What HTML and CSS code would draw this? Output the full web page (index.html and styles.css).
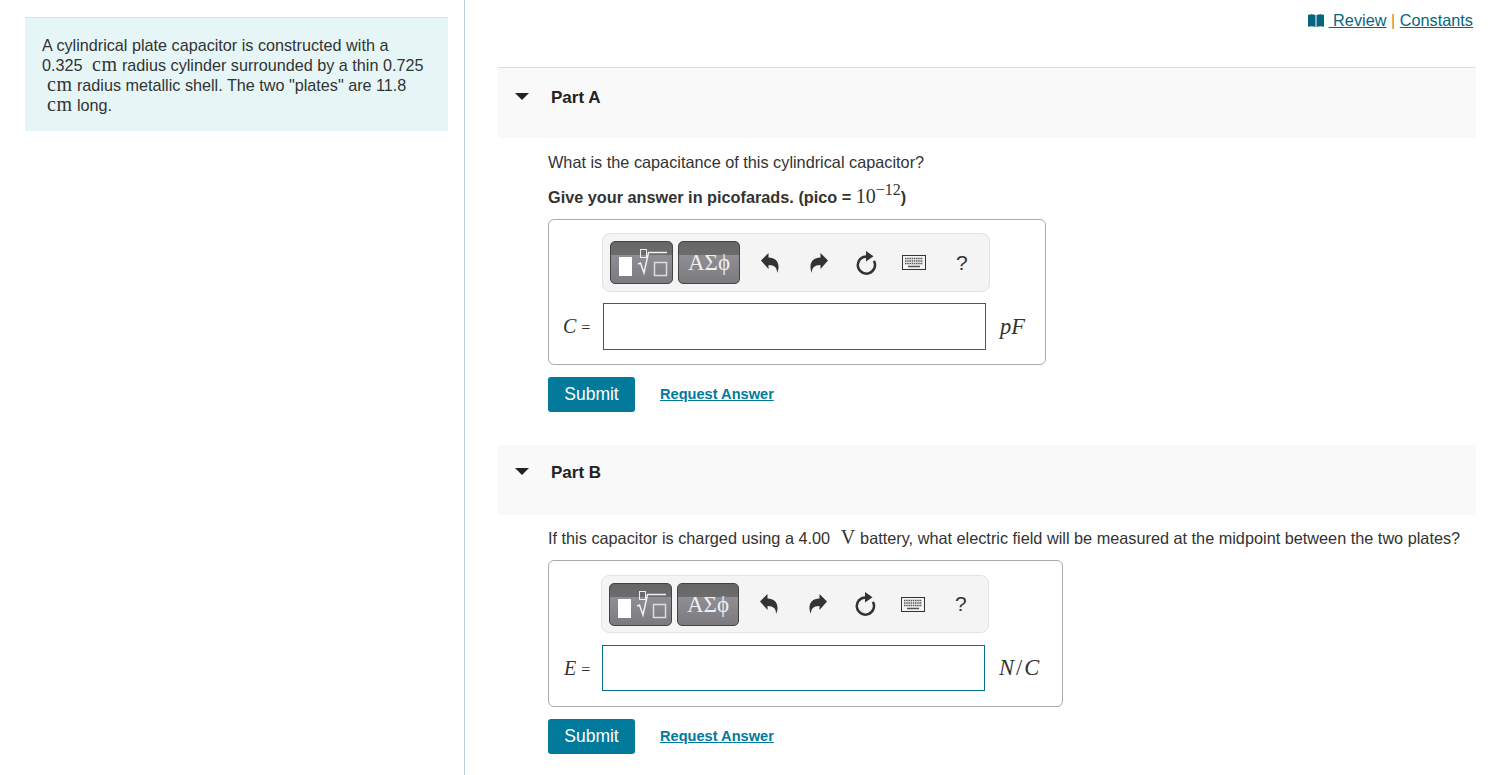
FILE: index.html
```html
<!DOCTYPE html>
<html lang="en">
<head>
    <meta charset="UTF-8">
    <title>Cylindrical Capacitor</title>
    <link rel="stylesheet" href="styles.css">
</head>
<body>
    <div class="layout">
        <div class="intro-col">
            <div class="intro">
                A cylindrical plate capacitor is constructed with a<br>
                0.325 <span class="unit first">cm</span> radius cylinder surrounded by a thin 0.725<br>
                <span class="unit">cm</span> radius metallic shell. The two "plates" are 11.8<br>
                <span class="unit">cm</span> long.
            </div>
        </div>

        <div class="main-col">
            <div class="top-links">
                <svg class="book" width="16" height="13" viewBox="0 0 16 13"><path d="M0 .8C2.500 0 5 0 7.500 1V13C5 12 2.500 12 0 12.800zM8.500 1C11 0 13.500 0 16 .8V12.800C13.500 12 11 12 8.500 13z" fill="#05667d"/></svg>
                <a href="#">&nbsp;Review</a> <span class="sep">|</span> <a href="#">Constants</a>
            </div>

            <div class="part-head part-a">
                <span class="caret"></span>
                <span class="part-title">Part A</span>
            </div>
            <div class="part-body first-part">
                <p class="question">What is the capacitance of this cylindrical capacitor?</p>
                <p class="hint">Give your answer in picofarads. (pico = <span class="math-num">10<sup>&minus;12</sup></span>)</p>

                <div class="answer-box box-a">
                    <div class="toolbar">
                        <div class="tool-btn btn-tmpl">
                            <svg width="61" height="41" viewBox="0 0 61 41">
                                <rect x="8" y="15" width="13" height="19" fill="#fff"/>
                                <rect x="29.500" y="7.500" width="6" height="8" fill="none" stroke="#eee"/>
                                <path d="M27 22l2.500-1 3.500 10 4.500-20.500H56" fill="none" stroke="#f0f0f0" stroke-width="1.500"/>
                                <rect x="43.500" y="20.500" width="12" height="13" fill="none" stroke="#ddd" stroke-width="1.500"/>
                            </svg>
                        </div>
                        <div class="tool-btn btn-greek">&Alpha;&Sigma;&#981;</div>
                        <svg class="tool-icon undo" width="18" height="20" viewBox="0 0 18 20"><path d="M0 7.500L7.500 0v4.500c6.500 0 10.500 4 10 10.500-.2 2-.8 3.500-1.500 5 .2-4.800-2-8-8.500-8V16z" fill="#333"/></svg>
                        <svg class="tool-icon redo" width="18" height="20" viewBox="0 0 18 20"><path d="M18 7.500L10.500 0v4.500C4 4.500 0 8.500.5 15c.2 2 .8 3.500 1.500 5-.2-4.800 2-8 8.500-8V16z" fill="#333"/></svg>
                        <svg class="tool-icon reset" width="21" height="24" viewBox="0 0 21 24"><path d="M17.900 9.800A8.600 8.600 0 1 1 10.500 5.400" fill="none" stroke="#333" stroke-width="2.500"/><path d="M10 0l7.500 5.300-7.500 5.200z" fill="#333"/></svg>
                        <svg class="tool-icon keys" width="24" height="15" viewBox="0 0 24 15"><rect x=".5" y=".5" width="23" height="14" fill="#f4f4f4" stroke="#333"/><path d="M3 3.500h18M3 6h18M3 8.500h18" stroke="#555" stroke-width="1.400" stroke-dasharray="1.500 .7"/><path d="M6 11.500h12" stroke="#555" stroke-width="1.500"/></svg>
                        <span class="tool-help">?</span>
                    </div>
                    <div class="answer-row">
                        <span class="answer-label"><i>C</i> <span class="eq">=</span></span>
                        <div class="answer-input"></div>
                        <span class="answer-unit"><i>pF</i></span>
                    </div>
                </div>
                <div class="actions">
                    <button class="submit">Submit</button>
                    <a class="request" href="#">Request Answer</a>
                </div>
            </div>

            <div class="part-head part-b">
                <span class="caret"></span>
                <span class="part-title">Part B</span>
            </div>
            <div class="part-body">
                <p class="question">If this capacitor is charged using a 4.00 <span class="unit volt">V</span> battery, what electric field will be measured at the midpoint between the two plates?</p>

                <div class="answer-box box-b">
                    <div class="toolbar">
                        <div class="tool-btn btn-tmpl">
                            <svg width="61" height="41" viewBox="0 0 61 41">
                                <rect x="8" y="15" width="13" height="19" fill="#fff"/>
                                <rect x="29.500" y="7.500" width="6" height="8" fill="none" stroke="#eee"/>
                                <path d="M27 22l2.500-1 3.500 10 4.500-20.500H56" fill="none" stroke="#f0f0f0" stroke-width="1.500"/>
                                <rect x="43.500" y="20.500" width="12" height="13" fill="none" stroke="#ddd" stroke-width="1.500"/>
                            </svg>
                        </div>
                        <div class="tool-btn btn-greek">&Alpha;&Sigma;&#981;</div>
                        <svg class="tool-icon undo" width="18" height="20" viewBox="0 0 18 20"><path d="M0 7.500L7.500 0v4.500c6.500 0 10.500 4 10 10.500-.2 2-.8 3.500-1.500 5 .2-4.800-2-8-8.500-8V16z" fill="#333"/></svg>
                        <svg class="tool-icon redo" width="18" height="20" viewBox="0 0 18 20"><path d="M18 7.500L10.500 0v4.500C4 4.500 0 8.500.5 15c.2 2 .8 3.500 1.500 5-.2-4.800 2-8 8.500-8V16z" fill="#333"/></svg>
                        <svg class="tool-icon reset" width="21" height="24" viewBox="0 0 21 24"><path d="M17.900 9.800A8.600 8.600 0 1 1 10.500 5.400" fill="none" stroke="#333" stroke-width="2.500"/><path d="M10 0l7.500 5.300-7.500 5.200z" fill="#333"/></svg>
                        <svg class="tool-icon keys" width="24" height="15" viewBox="0 0 24 15"><rect x=".5" y=".5" width="23" height="14" fill="#f4f4f4" stroke="#333"/><path d="M3 3.500h18M3 6h18M3 8.500h18" stroke="#555" stroke-width="1.400" stroke-dasharray="1.500 .7"/><path d="M6 11.500h12" stroke="#555" stroke-width="1.500"/></svg>
                        <span class="tool-help">?</span>
                    </div>
                    <div class="answer-row">
                        <span class="answer-label"><i>E</i> <span class="eq">=</span></span>
                        <div class="answer-input"></div>
                        <span class="answer-unit"><i>N</i><span class="slash">/</span><i>C</i></span>
                    </div>
                </div>
                <div class="actions">
                    <button class="submit">Submit</button>
                    <a class="request" href="#">Request Answer</a>
                </div>
            </div>
        </div>
    </div>
</body>
</html>
```

FILE: styles.css
```css
body {
    margin: 0;
    font-family: "Liberation Sans", Arial, sans-serif;
    font-size: 16.27px;
    color: #333;
    background: #fff;
}

.layout {
    display: flex;
    height: 775px;
    overflow: hidden;
}

.intro-col {
    flex: none;
    box-sizing: border-box;
    border-right: 1px solid #b9d0e2;
    width: 465px;
    padding: 17px 16px 0 25px;
}
.intro {
    background: #e6f6f7;
    border-top: 1px solid #d8e4e8;
    padding: 17px 16px 16px 17px;
    height: 114px;
    box-sizing: border-box;
    font-size: 16.2px;
    line-height: 20px;
}
.unit {
    font-family: "Liberation Serif", serif;
    font-size: 20px;
    line-height: 0;
    letter-spacing: .5px;
    margin-left: 5px;
}
.unit.first {
    margin-left: 5px;
}
.unit.volt {
    margin: 0 0 0 6px;
}

.main-col {
    flex: 1;
    padding: 0 16px 0 33px;
    min-width: 0;
}

.top-links {
    height: 67px;
    box-sizing: border-box;
    padding: 11px 3px 0 0;
    text-align: right;
    line-height: 18px;
}
.top-links a {
    color: #05667d;
}
.top-links .sep {
    color: #c98a2b;
}
.book {
    vertical-align: -1px;
}

.part-head {
    display: flex;
    align-items: flex-start;
    height: 70px;
    box-sizing: border-box;
    padding: 18px 0 0 17px;
    background: #f9f9f9;
}
.part-a {
    height: 71px;
    padding-top: 20px;
    border-top: 1px solid #ddd;
}
.caret {
    width: 0;
    height: 0;
    margin-top: 5px;
    border-left: 7px solid transparent;
    border-right: 7px solid transparent;
    border-top: 7px solid #222;
}
.part-title {
    margin-left: 22px;
    font-size: 17px;
    font-weight: bold;
    line-height: 20px;
    color: #222;
}

.part-body {
    padding-left: 50px;
}
.first-part {
    padding-bottom: 33px;
}
.question {
    margin: 0;
    padding-top: 13px;
    line-height: 20px;
}
.first-part .question {
    padding-top: 14px;
}
.hint {
    margin: 15px 0 0;
    line-height: 20px;
    font-weight: bold;
}
.math-num {
    font-family: "Liberation Serif", serif;
    font-weight: normal;
    font-size: 20px;
    line-height: 0;
}
.math-num sup {
    font-size: 16px;
    line-height: 0;
}

.answer-box {
    box-sizing: border-box;
    margin-top: 12px;
    border: 1px solid #aaa;
    border-radius: 6px;
    padding: 13px 0 0 14px;
}
.box-a {
    width: 498px;
    height: 146px;
}
.box-b {
    width: 515px;
    height: 147px;
    padding: 14px 0 0 15px;
}

.toolbar {
    display: flex;
    align-items: center;
    width: 388px;
    height: 59px;
    box-sizing: border-box;
    margin-left: 39px;
    padding: 0 7px;
    background: #f4f4f4;
    border: 1px solid #e2e2e2;
    border-radius: 8px;
}
.box-b .toolbar {
    height: 58px;
    margin-left: 37px;
}
.tool-btn {
    box-sizing: border-box;
    height: 43px;
    border-radius: 5px;
    border: 1px solid #444;
    background: linear-gradient(#666 0, #6c6c6c 31%, #8e8e94 31%, #7b7b7f 100%);
    color: #eee;
}
.btn-tmpl {
    width: 63px;
    overflow: hidden;
}
.btn-greek {
    width: 62px;
    margin-left: 5px;
    font-family: "Liberation Serif", serif;
    font-size: 23px;
    line-height: 41px;
    text-align: center;
}
.tool-icon {
    flex: none;
}
.undo {
    margin-left: 21px;
}
.redo {
    margin-left: 31px;
}
.reset {
    margin-left: 28px;
}
.keys {
    margin-left: 25px;
}
.tool-help {
    margin-left: 30px;
    font-size: 21px;
    color: #333;
}

.answer-row {
    display: flex;
    align-items: center;
    margin-top: 11px;
}
.box-b .answer-row {
    margin-top: 12px;
}
.answer-label {
    width: 40px;
    font-family: "Liberation Serif", serif;
    font-size: 20px;
}
.box-b .answer-label {
    width: 38px;
}
.answer-label .eq {
    font-size: 16px;
}
.answer-input {
    box-sizing: border-box;
    width: 383px;
    height: 47px;
    border: 1px solid #05708c;
    background: #fff;
}
.box-b .answer-input {
    height: 46px;
}
.answer-unit {
    margin-left: 14px;
    font-family: "Liberation Serif", serif;
    font-size: 22.5px;
}
.slash {
    margin: 0 2px;
}

.actions {
    display: flex;
    align-items: center;
    margin-top: 12px;
}
.submit {
    width: 87px;
    height: 35px;
    padding: 0;
    border: 0;
    border-radius: 3px;
    background: #027a9c;
    color: #fff;
    font-family: "Liberation Sans", Arial, sans-serif;
    font-size: 17.500px;
}
.request {
    margin: 0 0 2px 25px;
    font-size: 14.600px;
    font-weight: bold;
    color: #027a9c;
}
```
